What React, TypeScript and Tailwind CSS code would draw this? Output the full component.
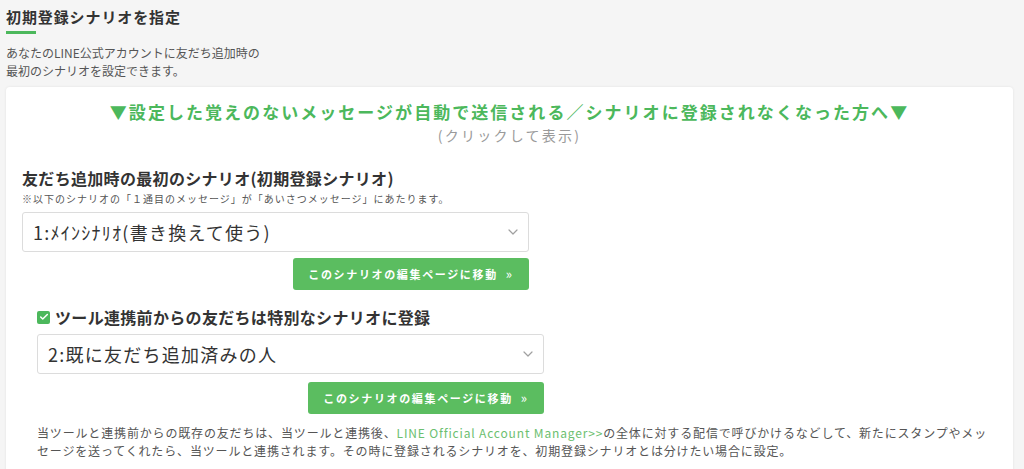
import React from "react";
import { ChevronDown, Check } from "lucide-react";

const font = "font-['Noto_Sans_CJK_JP','Noto_Sans',sans-serif]";

const ScenarioSelect: React.FC<{ label: string }> = ({ label }) => (
  <div className="flex items-center justify-between h-[40px] w-[507px] border border-[#dcdcdc] rounded-[3px] bg-white pl-[10px] pr-[7px]">
    <span className="text-[18px] text-[#333] tracking-[0.07em] leading-none">{label}</span>
    <ChevronDown size={16} strokeWidth={1.8} className="text-[#a0a0a0]" />
  </div>
);

const EditButton: React.FC = () => (
  <button className="h-[32px] w-[236px] rounded-[3px] bg-[#5bbd60] text-white text-[11px] font-bold tracking-[0.15em] flex items-center justify-center gap-[8px]">
    <span>このシナリオの編集ページに移動</span>
    <span className="text-[13px] font-normal">»</span>
  </button>
);

const App: React.FC = () => {
  return (
    <div className={`${font} min-h-screen bg-[#f5f5f5] px-[6px] pt-[7px] text-[#333]`}>
      <h2 className="text-[15px] font-bold leading-[20px] tracking-[0.06em] text-[#333]">
        初期登録シナリオを指定
      </h2>
      <div className="mt-[4px] h-[3px] w-[30px] bg-[#4cb85c]" />
      <p className="mt-[10px] text-[12px] leading-[18px] text-[#555]">
        あなたのLINE公式アカウントに友だち追加時の
        <br />
        最初のシナリオを設定できます。
      </p>

      <div className="mt-[7px] mr-[5px] rounded-[4px] bg-white shadow-[0_0_3px_rgba(0,0,0,0.08)] pl-[16px] pr-[16px] pt-[12px] pb-[20px]">
        <div className="text-center">
          <div className="text-[17px] font-bold leading-[26px] tracking-[0.12em] text-[#4cb85c]">
            ▼設定した覚えのないメッセージが自動で送信される／シナリオに登録されなくなった方へ▼
          </div>
          <div className="text-[14px] leading-[20px] tracking-[0.16em] text-[#9a9a9a]">
            (クリックして表示)
          </div>
        </div>

        <div className="mt-[22px] text-[16px] font-bold leading-[22px] tracking-[0.02em] text-[#333]">
          友だち追加時の最初のシナリオ(初期登録シナリオ)
        </div>
        <div className="mt-[3px] text-[10px] leading-[14px] tracking-[0.1em] text-[#555]">
          ※以下のシナリオの「１通目のメッセージ」が「あいさつメッセージ」にあたります。
        </div>
        <div className="mt-[6px] flex w-[507px] flex-col items-end gap-[6px]">
          <ScenarioSelect label="1:ﾒｲﾝｼﾅﾘｵ(書き換えて使う)" />
          <EditButton />
        </div>

        <div className="mt-[16px] pl-[15px]">
          <label className="flex items-center gap-[5px]">
            <span className="flex h-[13px] w-[13px] items-center justify-center rounded-[2px] bg-[#4cb85c]">
              <Check size={10} strokeWidth={3.5} className="text-white" />
            </span>
            <span className="text-[16px] font-bold leading-[22px] tracking-[0.02em] text-[#333]">
              ツール連携前からの友だちは特別なシナリオに登録
            </span>
          </label>
          <div className="mt-[6px] flex w-[507px] flex-col items-end gap-[8px]">
            <ScenarioSelect label="2:既に友だち追加済みの人" />
            <EditButton />
          </div>
          <p className="mt-[10px] text-[12px] leading-[18px] tracking-[0.07em] text-[#555]">
            当ツールと連携前からの既存の友だちは、当ツールと連携後、
            <span className="text-[#6cc070]">LINE Official Account Manager&gt;&gt;</span>
            の全体に対する配信で呼びかけるなどして、新たにスタンプやメッ
            <br />
            セージを送ってくれたら、当ツールと連携されます。その時に登録されるシナリオを、初期登録シナリオとは分けたい場合に設定。
          </p>
        </div>
      </div>
    </div>
  );
};

export default App;
